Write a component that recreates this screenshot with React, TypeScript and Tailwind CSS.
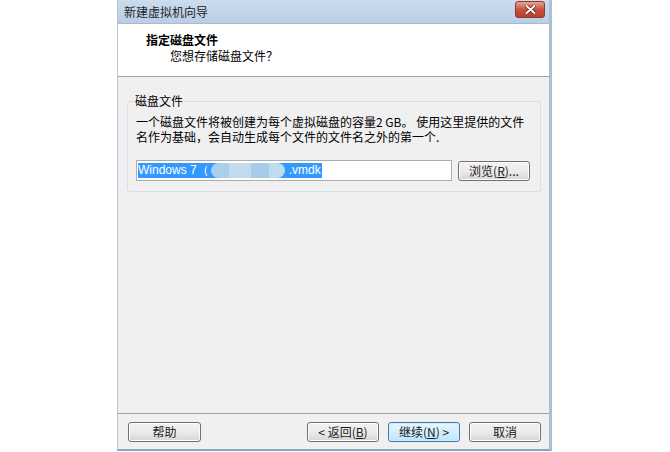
import React from "react";

const cjk = { fontFamily: '"Noto Sans CJK SC", "Liberation Sans", sans-serif' };

function Btn({ children, primary, w = "w-[73px]" }: { children: React.ReactNode; primary?: boolean; w?: string }) {
  return (
    <div
      className={`${w} h-[20px] flex items-center justify-center rounded-[3px] border text-[12px] leading-none text-[#1a1a1a] ${
        primary
          ? "border-[#3c7fb1] bg-gradient-to-b from-[#eaf6fd] to-[#bee6fd] shadow-[inset_0_0_0_1px_#d2ecfb]"
          : "border-[#707070] bg-gradient-to-b from-[#f2f2f2] via-[#ebebeb] to-[#d6d6d6] shadow-[inset_0_0_0_1px_#fcfcfc]"
      }`}
    >
      {children}
    </div>
  );
}

export default function App() {
  return (
    <div className="w-[670px] h-[452px] bg-white" style={cjk}>
      <div className="ml-[117px] w-[435px] h-[451px] flex flex-col border-l border-[#b5c6d8] border-r-[3px] border-r-[#a9bfd3] border-b-[2px] border-b-[#88a5bd]">
        {/* title bar */}
        <div className="h-[24px] flex items-center justify-between pl-[6px] pr-[4px] bg-gradient-to-b from-[#cddcee] to-[#b9cde5] border-b border-[#a6bad0]">
          <span className="text-[12px] text-[#1e1e1e] leading-none">新建虚拟机向导</span>
          <div className="w-[30px] h-[17px] mt-[-4px] rounded-[3px] border border-[#8a3a2e] bg-gradient-to-b from-[#e6a596] via-[#c9503c] to-[#b8402c] flex items-center justify-center">
            <svg width="11" height="9" viewBox="0 0 11 9">
              <path d="M1.5 1 L9.5 8 M9.5 1 L1.5 8" stroke="#5a1a10" strokeWidth="3.4" strokeLinecap="round" />
              <path d="M1.5 1 L9.5 8 M9.5 1 L1.5 8" stroke="#ffffff" strokeWidth="2" strokeLinecap="round" />
            </svg>
          </div>
        </div>
        {/* header */}
        <div className="h-[53px] bg-white border-b border-[#a0a0a0] pt-[8px] pl-[28px]">
          <div className="text-[12px] font-bold leading-[16px] text-black">指定磁盘文件</div>
          <div className="text-[12px] leading-[16px] text-black pl-[24px]">您想存储磁盘文件？</div>
        </div>
        {/* content */}
        <div className="flex-1 bg-[#f0f0f0] flex flex-col">
          <div className="flex-1 pl-[9px] pr-[8px] pt-[17px]">
            <fieldset className="border border-[#d5dfe5] rounded-[3px] px-[8px] pb-[10px]">
              <legend className="text-[12px] leading-[14px] px-[1px] ml-[-2px] text-black">磁盘文件</legend>
              <p className="text-[12px] leading-[15px] text-black mt-[6px]">
                一个磁盘文件将被创建为每个虚拟磁盘的容量2 GB。 使用这里提供的文件名作为基础，会自动生成每个文件的文件名之外的第一个.
              </p>
              <div className="flex items-center gap-[6px] mt-[16px]">
                <div className="w-[316px] h-[21px] bg-white border border-[#abadb3] flex items-center px-[1px]">
                  <span
                    className="bg-[#3399ff] text-white text-[12px] leading-[15px] flex items-center pr-[1px]"
                    style={{ fontFamily: '"Liberation Sans", sans-serif' }}
                  >
                    Windows 7（
                    <span className="inline-flex w-[74px] h-[15px] ml-[2px]">
                      <span className="w-[18px] h-[15px] bg-[#a9d0ea] rounded-l-full" />
                      <span className="w-[22px] h-[15px] bg-[#c2dcee]" />
                      <span className="w-[18px] h-[15px] bg-[#a3cde9]" />
                      <span className="w-[16px] h-[15px] bg-[#bcdcf0] rounded-r-full" />
                    </span>
                    <span className="ml-[4px]">.vmdk</span>
                  </span>
                </div>
                <Btn w="w-[72px]">浏览(<u>R</u>)...</Btn>
              </div>
            </fieldset>
          </div>
          <div className="h-[36px] border-t border-[#a0a0a0] flex items-center pl-[10px] pr-[8px]">
            <Btn>帮助</Btn>
            <div className="flex-1" />
            <div className="flex gap-[9px]">
              <Btn w="w-[72px]">&lt; 返回(<u>B</u>)</Btn>
              <Btn w="w-[72px]" primary>继续(<u>N</u>) &gt;</Btn>
              <Btn w="w-[72px]">取消</Btn>
            </div>
          </div>
        </div>
      </div>
    </div>
  );
}
